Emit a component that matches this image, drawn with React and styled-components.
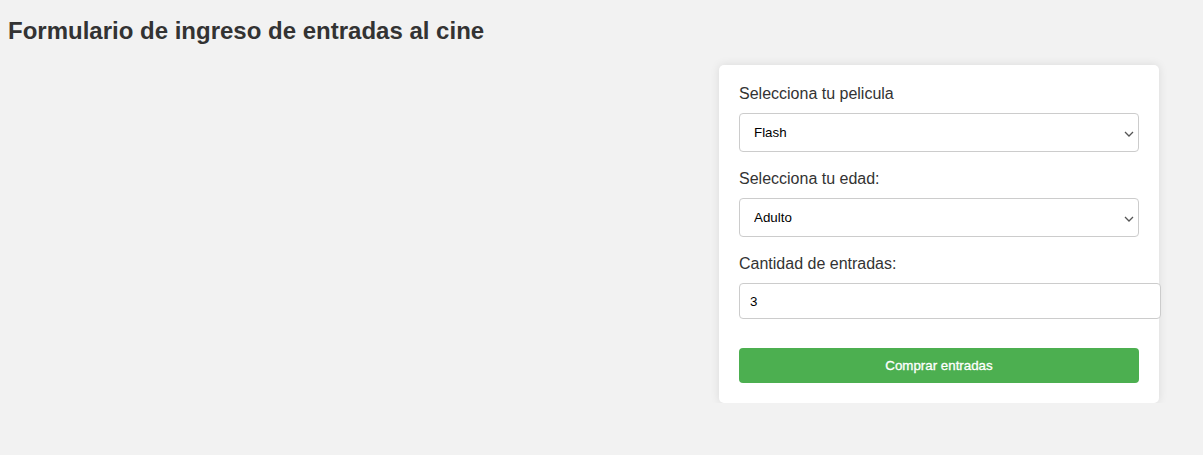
import React, { useState } from "react";
import styled, { createGlobalStyle } from "styled-components";

const GlobalStyle = createGlobalStyle`
  body {
    margin: 8px;
    background: #f2f2f2;
    font-family: "Liberation Sans", Arial, sans-serif;
    color: #333;
  }
`;

const Title = styled.h2`
  font-size: 24px;
  font-weight: bold;
  color: #333;
  margin: 9px 0 20px;
`;

const Row = styled.div`
  display: flex;
  justify-content: flex-end;
  padding-right: 36px;
`;

const Card = styled.form`
  width: 400px;
  padding: 20px;
  background: #fff;
  border-radius: 5px;
  box-shadow: 0 0 10px rgba(0, 0, 0, 0.1);
`;

const Label = styled.label`
  display: block;
  font-size: 16px;
  line-height: 18px;
  margin-bottom: 10px;
  color: #333;
`;

const SelectWrap = styled.div`
  position: relative;
  margin-bottom: 18px;
`;

const Select = styled.select`
  display: block;
  width: 100%;
  height: 39px;
  padding: 10px 24px 10px 14px;
  font-family: "Liberation Sans", Arial, sans-serif;
  font-size: 13.33px;
  color: #000;
  background: #fff;
  border: 1px solid #ccc;
  border-radius: 4px;
  appearance: none;
  -webkit-appearance: none;
`;

const Chevron = styled.svg`
  position: absolute;
  right: 5px;
  top: 50%;
  width: 10px;
  height: 6px;
  margin-top: -2px;
  pointer-events: none;
`;

const NumberInput = styled.input`
  display: block;
  width: 100%;
  height: 14px;
  padding: 10px;
  margin: 0 0 29px;
  font-family: "Liberation Sans", Arial, sans-serif;
  font-size: 13.33px;
  color: #000;
  border: 1px solid #ccc;
  border-radius: 4px;
  -moz-appearance: textfield;
  &::-webkit-inner-spin-button,
  &::-webkit-outer-spin-button {
    -webkit-appearance: none;
    margin: 0;
  }
`;

const Button = styled.button`
  display: block;
  width: 100%;
  height: 35px;
  padding: 10px;
  border: none;
  border-radius: 4px;
  background: #4caf50;
  color: #fff;
  font-family: "Liberation Sans", Arial, sans-serif;
  font-size: 13.33px;
  font-weight: normal;
  -webkit-text-stroke: 0.3px #fff;
  cursor: pointer;
`;

function Dropdown({ id, value, onChange, children }) {
  return (
    <SelectWrap>
      <Select id={id} value={value} onChange={onChange}>
        {children}
      </Select>
      <Chevron viewBox="0 0 10 6" aria-hidden="true">
        <path d="M1 1 L5 5 L9 1" fill="none" stroke="#555" strokeWidth="1.3" />
      </Chevron>
    </SelectWrap>
  );
}

export default function App() {
  const [movie, setMovie] = useState("flash");
  const [age, setAge] = useState("adulto");
  const [qty, setQty] = useState(3);

  return (
    <>
      <GlobalStyle />
      <Title>Formulario de ingreso de entradas al cine</Title>
      <Row>
        <Card onSubmit={e => e.preventDefault()}>
          <Label htmlFor="pelicula">Selecciona tu pelicula</Label>
          <Dropdown id="pelicula" value={movie} onChange={e => setMovie(e.target.value)}>
            <option value="flash">Flash</option>
            <option value="elementos">Elementos</option>
            <option value="barbie">Barbie</option>
          </Dropdown>
          <Label htmlFor="edad">Selecciona tu edad:</Label>
          <Dropdown id="edad" value={age} onChange={e => setAge(e.target.value)}>
            <option value="nino">Niño</option>
            <option value="adulto">Adulto</option>
            <option value="mayor">Adulto mayor</option>
          </Dropdown>
          <Label htmlFor="cantidad">Cantidad de entradas:</Label>
          <NumberInput
            id="cantidad"
            type="number"
            min="1"
            value={qty}
            onChange={e => setQty(e.target.value)}
          />
          <Button type="submit">Comprar entradas</Button>
        </Card>
      </Row>
    </>
  );
}
